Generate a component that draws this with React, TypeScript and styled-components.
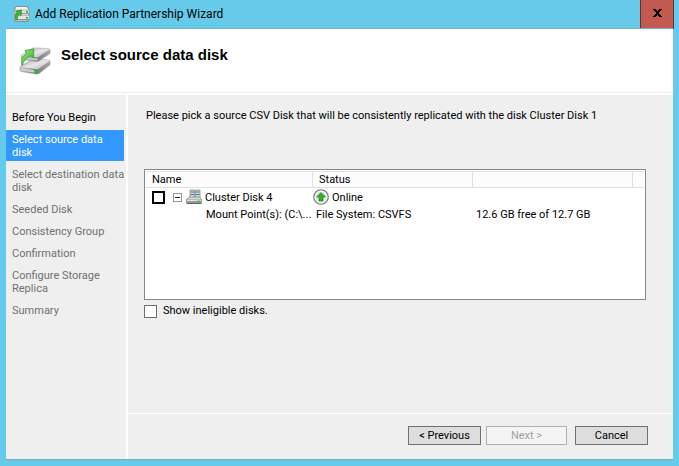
import React from "react";
import styled, { createGlobalStyle } from "styled-components";

const GlobalStyle = createGlobalStyle`
  *, *::before, *::after { box-sizing: border-box; }
  body {
    margin: 0;
    background: #66cbea;
    color: #000;
    font: 11px/16px Roboto, "Liberation Sans", sans-serif;
  }
`;

const Window = styled.div`
  display: flex;
  flex-direction: column;
  min-height: 100vh;
  padding: 0 6px 6px;
  background: #66cbea;
`;

const TitleBar = styled.header`
  display: flex;
  align-items: center;
  height: 28px;
  padding-left: 8px;
  gap: 5px;
  font-size: 12px;
`;

const TitleText = styled.span`
  flex: 1;
`;

const CloseButton = styled.button`
  display: grid;
  place-items: center;
  align-self: flex-start;
  width: 34px;
  height: 29px;
  margin-right: -1px;
  padding: 0 0 2px;
  border: 1px solid #5a3638;
  border-top: 0;
  background: #c25a50;
`;

const Client = styled.div`
  display: flex;
  flex: 1;
  flex-direction: column;
  border-top: 1px solid #7fa9c4;
  border-bottom: 1px solid #7fa9bb;
  background: #fff;
`;

const Banner = styled.div`
  display: flex;
  align-items: flex-start;
  gap: 10px;
  height: 64px;
  padding: 17px 13px 0;
  border-bottom: 1px solid #ececec;
`;

const Heading = styled.h1`
  margin: 0;
  font: bold 15px/18px "Liberation Sans", Arial, sans-serif;
`;

const Body = styled.div`
  display: grid;
  flex: 1;
  grid-template-columns: 120px 1fr;
  column-gap: 2px;
  margin-top: 2px;
`;

const Steps = styled.nav`
  display: flex;
  flex-direction: column;
  gap: 4px;
  padding-top: 13px;
  background: #efefef;
`;

const Step = styled.a<{ $state: "done" | "current" | "pending" }>`
  margin-right: ${({ $state }) => ($state === "current" ? 2 : 0)}px;
  padding: 3px ${({ $state }) => ($state === "current" ? 4 : 0)}px 2px 6px;
  line-height: 13px;
  text-decoration: none;
  color: ${({ $state }) =>
    $state === "current" ? "#fff" : $state === "done" ? "#000" : "#707070"};
  background: ${({ $state }) => ($state === "current" ? "#3399ff" : "transparent")};
`;

const Main = styled.main`
  display: flex;
  flex-direction: column;
  min-width: 0;
`;

const Page = styled.section`
  flex: 1;
  padding: 13px 27px 0 16px;
  background: #efefef;
`;

const Prompt = styled.p`
  margin: 0 0 45px;
  padding-left: 2px;
`;

const DiskList = styled.div`
  height: 131px;
  padding: 1px;
  border: 1px solid #828790;
  background: #fff;
`;

const DiskTable = styled.table`
  width: 100%;
  table-layout: fixed;
  border-collapse: separate;
  border-spacing: 0;
`;

const Column = styled.col<{ $width?: number }>`
  width: ${({ $width }) => ($width ? `${$width}px` : "auto")};
`;

const HeadCell = styled.th`
  height: 17px;
  padding: 0 0 0 6px;
  border: solid #e0e0e0;
  border-width: 1px 1px 1px 0;
  background: #fcfcfc;
  font-weight: normal;
  line-height: 15px;
  text-align: left;

  &:last-child { border-right: 0; }
`;

const Cell = styled.td<{ $indent?: number }>`
  height: 17px;
  padding: 0 0 0 ${({ $indent }) => $indent ?? 3}px;
  line-height: 17px;
  white-space: nowrap;
`;

const CellContent = styled.div`
  display: flex;
  align-items: center;
  height: 18px;
`;

const CheckBox = styled.input<{ $heavy?: boolean }>`
  appearance: none;
  flex: none;
  width: 13px;
  height: 13px;
  margin: 0;
  border: ${({ $heavy }) => ($heavy ? "2px solid #000" : "1px solid #707070")};
  background: #fff;
`;

const ToggleButton = styled.button`
  width: 9px;
  height: 9px;
  margin: 0 4px 0 8px;
  padding: 0;
  border: 1px solid #969696;
  background: linear-gradient(#222, #222) center / 5px 1px no-repeat #fff;
`;

const DiskName = styled.label`
  margin-left: 3px;
`;

const StatusText = styled.span`
  margin-left: 3px;
`;

const Option = styled.label`
  display: flex;
  align-items: center;
  gap: 6px;
  width: fit-content;
  margin-top: 3px;
`;

const Footer = styled.footer`
  display: flex;
  justify-content: flex-end;
  height: 45px;
  margin-top: 1px;
  padding: 12px 25px 0 0;
  background: #efefef;
`;

const Button = styled.button<{ $wide?: boolean; $gap?: number }>`
  width: ${({ $wide }) => ($wide ? 81 : 73)}px;
  height: 19px;
  margin-left: ${({ $gap }) => $gap ?? 0}px;
  padding: 0;
  border: 1px solid #707070;
  background: #dddddd;
  color: #000;
  font: inherit;
  line-height: 17px;

  &:disabled {
    border-color: #adb2b5;
    background: #f4f4f4;
    color: #a0a0a0;
  }
`;

const WizardIcon = () => (
  <svg width="16" height="16" viewBox="0 0 16 16" aria-hidden="true">
    <path d="M2 .5h11l2 3v10l-1 2H1l-1-2v-10z" fill="#b9bfbc" stroke="#7f8784" strokeWidth=".8" />
    <path d="M2.5 1h10l1.5 2.5H1.5zM1.5 7.5h13v1h-13z" fill="#f5f5f3" />
    <path d="M1 4.5h14v2.5H1zM1 10h14v3.5H1z" fill="#e2e5e3" />
    <path d="M1 7.5h14M1 13.5h14" stroke="#7b837f" strokeWidth=".8" />
    <path d="M1.5 13.5C.8 10 1.6 8 3.2 6.8L1.5 5.2 7.5 4 7 9.6 5.5 8.5C4 9.6 3.3 11.2 3.2 13.5z" fill="#3cba32" stroke="#1d8525" strokeWidth=".7" />
    <path d="M12 5h2v1.5h-2zM12 11h2v1.5h-2z" fill="#16a52a" />
  </svg>
);

const BannerIcon = () => (
  <svg width="32" height="30" viewBox="0 0 32 30" aria-hidden="true">
    <defs>
      <linearGradient id="disk-top" x1="0" y1="0" x2="1" y2="1">
        <stop stopColor="#a6a6aa" />
        <stop offset=".5" stopColor="#e6e6e8" />
        <stop offset="1" stopColor="#b0b0b4" />
      </linearGradient>
      <linearGradient id="disk-side" x1="0" y1="0" x2="1" y2="0">
        <stop stopColor="#c9c9cc" />
        <stop offset=".5" stopColor="#77777b" />
        <stop offset="1" stopColor="#a9a9ad" />
      </linearGradient>
      <linearGradient id="arrow-fill" x1="0" y1="0" x2="1" y2="1">
        <stop stopColor="#a2ed72" />
        <stop offset="1" stopColor="#28ab26" />
      </linearGradient>
    </defs>
    <path d="M1 21.5c0-1 .5-1.5 1.5-2L14 13.5l15 .5c1.5 0 2 .7 2 1.5V19L20 27.5c-1 .5-2 .7-3 .5L2 25.5c-.7-.2-1-.6-1-1.2z" fill="url(#disk-side)" stroke="#9c9ca0" strokeWidth=".6" />
    <path d="M1.5 21 14 13.500l15.500.5c1 0 1.500.8.8 1.300L18.500 23.500z" fill="url(#disk-top)" />
    <path d="m2 22 14 2.300v2.500L2 24.500z" fill="#cfcfd2" />
    <path d="m15.500 23.800 3 .4v3l-3-.4z" fill="#2aca22" stroke="#258b22" strokeWidth=".4" />
    <path d="M2 9.500 14 2l15 .5c1.500 0 2 .7 2 1.500v3.500L19 15.500 3 13.500z" fill="url(#disk-side)" stroke="#9c9ca0" strokeWidth=".6" />
    <path d="M2 9.500 14 2l15.500.5c1 0 1.500.8.800 1.300L18.500 11.500z" fill="url(#disk-top)" />
    <path d="m4 11 14.500 1.500v2L4 12.800z" fill="#cfcfd2" />
    <path d="M3 19.500C1.500 13.500 3.800 9.800 7.700 7.700L6 4.500 14.800 3 14.500 12l-3-2.300C7.200 11.600 5 14.500 3 19.500z" fill="url(#arrow-fill)" stroke="#32a32e" strokeWidth=".8" />
  </svg>
);

const ServerDiskIcon = () => (
  <svg width="16" height="16" viewBox="0 0 16 16" aria-hidden="true">
    <path d="M4 1h4.500v8H4zM9.500 1H14v8H9.500z" fill="#d0dadd" stroke="#7e9096" strokeWidth=".8" />
    <path d="M4.500 3h3.500M10 3h3.500M4.500 5.500h3.500M10 5.500h3.500" stroke="#567984" />
    <path d="M.500 10.500 3.500 8h10l2 2.500v4H.500z" fill="#97999e" stroke="#7c7d82" strokeWidth=".6" />
    <path d="m1 10.500 2.700-2h9.600l1.700 2z" fill="#dcdcdf" />
    <path d="M1 11.500h14" stroke="#e6e6e8" />
    <path d="M1 14.500h14" stroke="#606268" />
    <path d="M11 11.500h3v2h-3z" fill="#32cf2f" />
  </svg>
);

const OnlineIcon = () => (
  <svg width="16" height="16" viewBox="0 0 16 16" aria-hidden="true">
    <circle cx="8" cy="8" r="7.2" fill="#e4e4e4" stroke="#777" strokeWidth="1.3" />
    <circle cx="8" cy="8" r="6" fill="none" stroke="#fafafa" />
    <path d="m8 3.500 4.500 4.500H10V12H6V8H3.500z" fill="#35ad24" stroke="#168412" strokeWidth=".6" />
  </svg>
);

const CloseIcon = () => (
  <svg width="9" height="8" viewBox="0 0 9 8" aria-hidden="true">
    <path d="M0 0h3v1h1v1h1V1h1V0h3v1H8v1H7v1H6v2h1v1h1v1h1v1H6V7H5V6H4v1H3v1H0V7h1V6h1V5h1V3H2V2H1V1H0z" fill="#000" />
  </svg>
);

const steps: { label: string; state: "done" | "current" | "pending" }[] = [
  { label: "Before You Begin", state: "done" },
  { label: "Select source data disk", state: "current" },
  { label: "Select destination data disk", state: "pending" },
  { label: "Seeded Disk", state: "pending" },
  { label: "Consistency Group", state: "pending" },
  { label: "Confirmation", state: "pending" },
  { label: "Configure Storage Replica", state: "pending" },
  { label: "Summary", state: "pending" },
];

export default function App() {
  return (
    <>
      <GlobalStyle />
      <Window>
        <TitleBar>
          <WizardIcon />
          <TitleText>Add Replication Partnership Wizard</TitleText>
          <CloseButton type="button" aria-label="Close">
            <CloseIcon />
          </CloseButton>
        </TitleBar>
        <Client>
          <Banner>
            <BannerIcon />
            <Heading>Select source data disk</Heading>
          </Banner>
          <Body>
            <Steps aria-label="Wizard steps">
              {steps.map(({ label, state }) => (
                <Step
                  key={label}
                  href="#"
                  $state={state}
                  aria-current={state === "current" ? "step" : undefined}
                >
                  {label}
                </Step>
              ))}
            </Steps>
            <Main>
              <Page>
                <Prompt>
                  Please pick a source CSV Disk that will be consistently replicated with the disk Cluster Disk 1
                </Prompt>
                <DiskList>
                  <DiskTable>
                    <colgroup>
                      <Column $width={167} />
                      <Column $width={160} />
                      <Column $width={160} />
                      <Column />
                    </colgroup>
                    <thead>
                      <tr>
                        <HeadCell scope="col">Name</HeadCell>
                        <HeadCell scope="col">Status</HeadCell>
                        <HeadCell />
                        <HeadCell />
                      </tr>
                    </thead>
                    <tbody>
                      <tr>
                        <Cell $indent={6}>
                          <CellContent>
                            <CheckBox id="disk-4" type="checkbox" $heavy />
                            <ToggleButton type="button" aria-label="Collapse Cluster Disk 4" aria-expanded />
                            <ServerDiskIcon />
                            <DiskName htmlFor="disk-4">Cluster Disk 4</DiskName>
                          </CellContent>
                        </Cell>
                        <Cell $indent={0}>
                          <CellContent>
                            <OnlineIcon />
                            <StatusText>Online</StatusText>
                          </CellContent>
                        </Cell>
                        <Cell />
                        <Cell />
                      </tr>
                      <tr>
                        <Cell $indent={60}>Mount Point(s): (C:\...</Cell>
                        <Cell>File System: CSVFS</Cell>
                        <Cell>12.6 GB free of 12.7 GB</Cell>
                        <Cell />
                      </tr>
                    </tbody>
                  </DiskTable>
                </DiskList>
                <Option>
                  <CheckBox type="checkbox" />
                  Show ineligible disks.
                </Option>
              </Page>
              <Footer>
                <Button type="button">&lt; Previous</Button>
                <Button type="button" $wide $gap={5} disabled>Next &gt;</Button>
                <Button type="button" $gap={8}>Cancel</Button>
              </Footer>
            </Main>
          </Body>
        </Client>
      </Window>
    </>
  );
}
